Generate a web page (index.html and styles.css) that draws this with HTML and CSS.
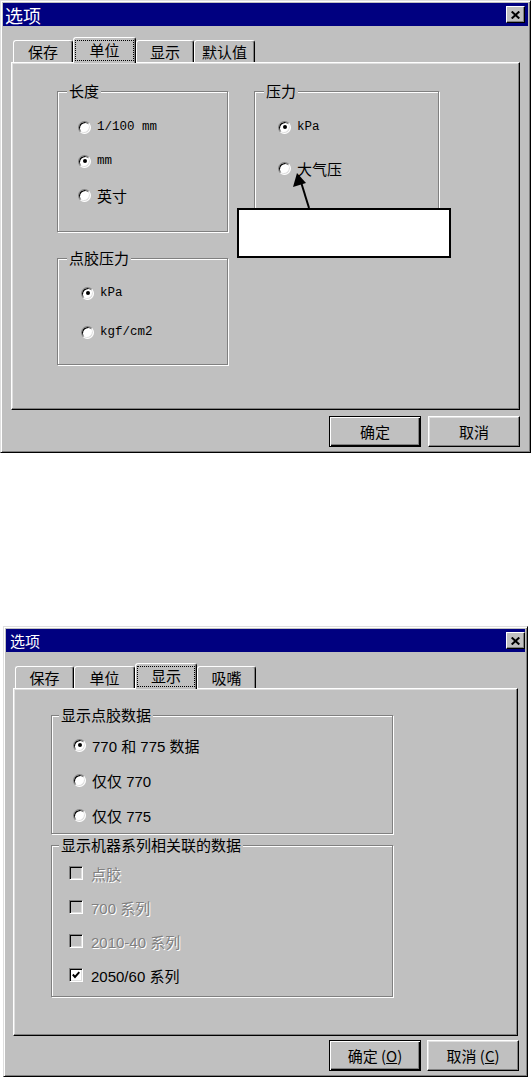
FILE: index.html
```html
<!DOCTYPE html>
<html lang="zh-CN">
<head>
    <meta charset="UTF-8">
    <title>选项</title>
    <link rel="stylesheet" href="styles.css">
</head>
<body>
    <!-- 单位 tab -->
    <div class="dialog dialog-units">
        <div class="titlebar">
            <span class="title">选项</span>
            <span class="close"><svg width="9" height="8" viewBox="0 0 9 8"><path d="M0.7 0.5L8.3 7.5M8.3 0.5L0.7 7.5" stroke="#000" stroke-width="2"/></svg></span>
        </div>
        <div class="tabs">
            <span class="tab tab-w60">保存</span>
            <span class="tab tab-w63 active"><span class="focus">单位</span></span>
            <span class="tab tab-w58">显示</span>
            <span class="tab tab-w61">默认值</span>
        </div>
        <div class="panel panel-units">
            <div class="col">
                <div class="group g-length">
                    <div class="legend">长度</div>
                    <div class="opts">
                        <div class="opt"><span class="radio"></span><span class="mono">1/100 mm</span></div>
                        <div class="opt"><span class="radio on"></span><span class="mono">mm</span></div>
                        <div class="opt"><span class="radio"></span><span>英寸</span></div>
                    </div>
                </div>
                <div class="group g-glue">
                    <div class="legend">点胶压力</div>
                    <div class="opts">
                        <div class="opt"><span class="radio on"></span><span class="mono">kPa</span></div>
                        <div class="opt"><span class="radio"></span><span class="mono">kgf/cm2</span></div>
                    </div>
                </div>
            </div>
            <div class="group g-pressure">
                <div class="legend">压力</div>
                <div class="opts">
                    <div class="opt"><span class="radio on"></span><span class="mono">kPa</span></div>
                    <div class="opt"><span class="radio"></span><span>大气压</span></div>
                </div>
            </div>
            <div class="callout"></div>
            <svg class="arrow" width="24" height="40" viewBox="0 0 24 40">
                <line x1="10" y1="12" x2="18" y2="38" stroke="#000" stroke-width="2"/>
                <polygon points="6,3 2,17 15,13" fill="#000"/>
            </svg>
        </div>
        <div class="buttons">
            <span class="btn default">确定</span>
            <span class="btn">取消</span>
        </div>
    </div>

    <!-- 显示 tab -->
    <div class="dialog dialog-display">
        <div class="titlebar">
            <span class="title">选项</span>
            <span class="close"><svg width="9" height="8" viewBox="0 0 9 8"><path d="M0.7 0.5L8.3 7.5M8.3 0.5L0.7 7.5" stroke="#000" stroke-width="2"/></svg></span>
        </div>
        <div class="tabs">
            <span class="tab tab-w59">保存</span>
            <span class="tab tab-w61">单位</span>
            <span class="tab tab-w62 active"><span class="focus">显示</span></span>
            <span class="tab tab-w59">吸嘴</span>
        </div>
        <div class="panel panel-display">
            <div class="group g-data">
                <div class="legend">显示点胶数据</div>
                <div class="opts">
                    <div class="opt"><span class="radio on"></span><span>770 和 775 数据</span></div>
                    <div class="opt"><span class="radio"></span><span>仅仅 770</span></div>
                    <div class="opt"><span class="radio"></span><span>仅仅 775</span></div>
                </div>
            </div>
            <div class="group g-series">
                <div class="legend">显示机器系列相关联的数据</div>
                <div class="opts">
                    <div class="opt check-opt disabled"><span class="check"></span><span>点胶</span></div>
                    <div class="opt check-opt disabled"><span class="check"></span><span>700 系列</span></div>
                    <div class="opt check-opt disabled"><span class="check"></span><span>2010-40 系列</span></div>
                    <div class="opt check-opt"><span class="check"><svg width="8" height="8" viewBox="0 0 8 8"><polyline points="0.8,3.5 3,6 7.3,1.2" fill="none" stroke="#000" stroke-width="1.9"/></svg></span><span>2050/60 系列</span></div>
                </div>
            </div>
        </div>
        <div class="buttons">
            <span class="btn default">确定 (<u>O</u>)</span>
            <span class="btn">取消 (<u>C</u>)</span>
        </div>
    </div>
</body>
</html>
```

FILE: styles.css
```css
* {
    margin: 0;
    padding: 0;
    box-sizing: border-box;
}
body {
    font-family: "Liberation Sans", "Noto Sans CJK SC", sans-serif;
    font-size: 15px;
    color: #000;
    background: #fff;
}
.dialog {
    background: #c0c0c0;
    border: 1px solid;
    border-color: #dfdfdf #000 #000 #dfdfdf;
    box-shadow: inset 1px 1px 0 #fff, inset -1px -1px 0 #808080;
    padding: 2px;
}
.dialog-units {
    width: 531px;
}
.dialog-display {
    width: 525px;
    margin: 173px 0 0 3px;
}
.titlebar {
    height: 23px;
    background: #000080;
    color: #fff;
    display: flex;
    align-items: center;
    justify-content: space-between;
    padding-left: 2px;
}
.title {
    font-family: "Noto Sans CJK SC", sans-serif;
    font-size: 18px;
    line-height: 1;
}
.dialog-display .title {
    font-size: 15px;
    padding-left: 2px;
}
.close {
    width: 19px;
    height: 17px;
    margin-right: 3px;
    background: #c0c0c0;
    border: 1px solid;
    border-color: #fff #000 #000 #fff;
    box-shadow: inset -1px -1px 0 #808080;
    display: flex;
    align-items: center;
    justify-content: center;
}
.dialog-display .close {
    margin-right: 0;
}
.tabs {
    display: flex;
    align-items: flex-end;
    height: 25px;
    margin: 11px 0 0 10px;
}
.dialog-display .tabs {
    margin-left: 9px;
}
.tab {
    height: 22px;
    border: 1px solid;
    border-bottom: none;
    border-color: #fff #000 transparent #fff;
    border-radius: 3px 3px 0 0;
    box-shadow: inset -1px 0 0 #808080;
    display: flex;
    align-items: center;
    justify-content: center;
    font-family: "Noto Sans CJK SC", sans-serif;
    font-size: 15px;
    line-height: 1;
}
.tab.active {
    height: 26px;
    margin-bottom: -1px;
    position: relative;
    z-index: 1;
    background: #c0c0c0;
    align-items: stretch;
    padding: 2px 1px 2px 1px;
}
.focus {
    flex: 1;
    border: 1px dotted #000;
    display: flex;
    align-items: center;
    justify-content: center;
    padding-bottom: 2px;
}
.tab-w58 { width: 58px; }
.tab-w59 { width: 59px; }
.tab-w60 { width: 60px; }
.tab-w61 { width: 61px; }
.tab-w62 { width: 62px; }
.tab-w63 { width: 63px; }
.panel {
    height: 348px;
    margin: 0 8px;
    border: 1px solid;
    border-color: #fff #000 #000 #fff;
    box-shadow: inset -1px -1px 0 #808080, inset 1px 1px 0 #dfdfdf;
    position: relative;
}
.panel-units {
    display: flex;
    gap: 26px;
    padding: 28px 0 0 45px;
}
.panel-display {
    margin: 0 7px;
    display: flex;
    flex-direction: column;
    gap: 11px;
    padding: 26px 0 0 37px;
}
.col {
    display: flex;
    flex-direction: column;
    gap: 26px;
}
.group {
    border: 1px solid #808080;
    box-shadow: 1px 1px 0 #fff, inset 1px 1px 0 #fff;
}
.legend {
    width: fit-content;
    height: 18px;
    margin: -10px 0 0 9px;
    padding: 0 2px;
    background: #c0c0c0;
    font-family: "Noto Sans CJK SC", sans-serif;
    font-size: 15px;
    line-height: 18px;
}
.opts {
    display: flex;
    flex-direction: column;
}
.opt {
    height: 34px;
    display: flex;
    align-items: center;
    gap: 6px;
    font-size: 15px;
}
.mono {
    font-family: "Liberation Mono", monospace;
    font-size: 12.5px;
}
.g-length {
    width: 171px;
    height: 141px;
}
.g-length .opts {
    padding: 10px 0 0 20px;
}
.g-glue {
    width: 171px;
    height: 107px;
}
.g-glue .opts {
    padding: 9px 0 0 23px;
    gap: 5px;
}
.g-pressure {
    width: 185px;
    height: 154px;
}
.g-pressure .opts {
    padding: 10px 0 0 23px;
    gap: 7px;
}
.g-data {
    width: 342px;
    height: 119px;
}
.g-data .legend,
.g-series .legend {
    margin-left: 7px;
}
.g-data .opts {
    padding: 4px 0 0 21px;
    gap: 1px;
}
.g-series {
    width: 342px;
    height: 152px;
}
.g-series .opts {
    padding: 2px 0 0 17px;
}
.check-opt {
    gap: 8px;
}
.radio {
    flex: none;
    width: 13px;
    height: 13px;
    border-radius: 50%;
    background: #fff;
    border: 1px solid;
    border-color: #808080 #fff #fff #808080;
    box-shadow: inset 1px 1px 0 #000, inset -1px -1px 0 #dfdfdf;
    display: flex;
    align-items: center;
    justify-content: center;
}
.radio.on::after {
    content: '';
    width: 4px;
    height: 4px;
    border-radius: 50%;
    background: #000;
}
.check {
    flex: none;
    width: 14px;
    height: 14px;
    background: #fff;
    border: 1px solid;
    border-color: #808080 #fff #fff #808080;
    box-shadow: inset 1px 1px 0 #000, inset -1px -1px 0 #dfdfdf;
    display: flex;
    align-items: center;
    justify-content: center;
}
.disabled {
    color: #808080;
    text-shadow: 1px 1px 0 #fff;
}
.disabled .check {
    background: #c0c0c0;
}
.callout {
    position: absolute;
    left: 225px;
    top: 145px;
    width: 214px;
    height: 50px;
    border: 2px solid #000;
    background: #fff;
}
.arrow {
    position: absolute;
    left: 279px;
    top: 107px;
}
.buttons {
    display: flex;
    justify-content: flex-end;
    gap: 7px;
    margin: 6px 0 3px;
    padding-right: 8px;
}
.dialog-display .buttons {
    gap: 6px;
    margin-top: 4px;
    padding-right: 6px;
}
.btn {
    width: 92px;
    height: 31px;
    border: 1px solid;
    border-color: #fff #000 #000 #fff;
    box-shadow: inset -1px -1px 0 #808080, inset 1px 1px 0 #dfdfdf;
    display: flex;
    align-items: center;
    justify-content: center;
    font-family: "Noto Sans CJK SC", sans-serif;
    font-size: 15px;
}
.btn.default {
    border-color: #000;
    box-shadow: inset 1px 1px 0 #fff, inset -1px -1px 0 #000, inset -2px -2px 0 #808080;
}
```
